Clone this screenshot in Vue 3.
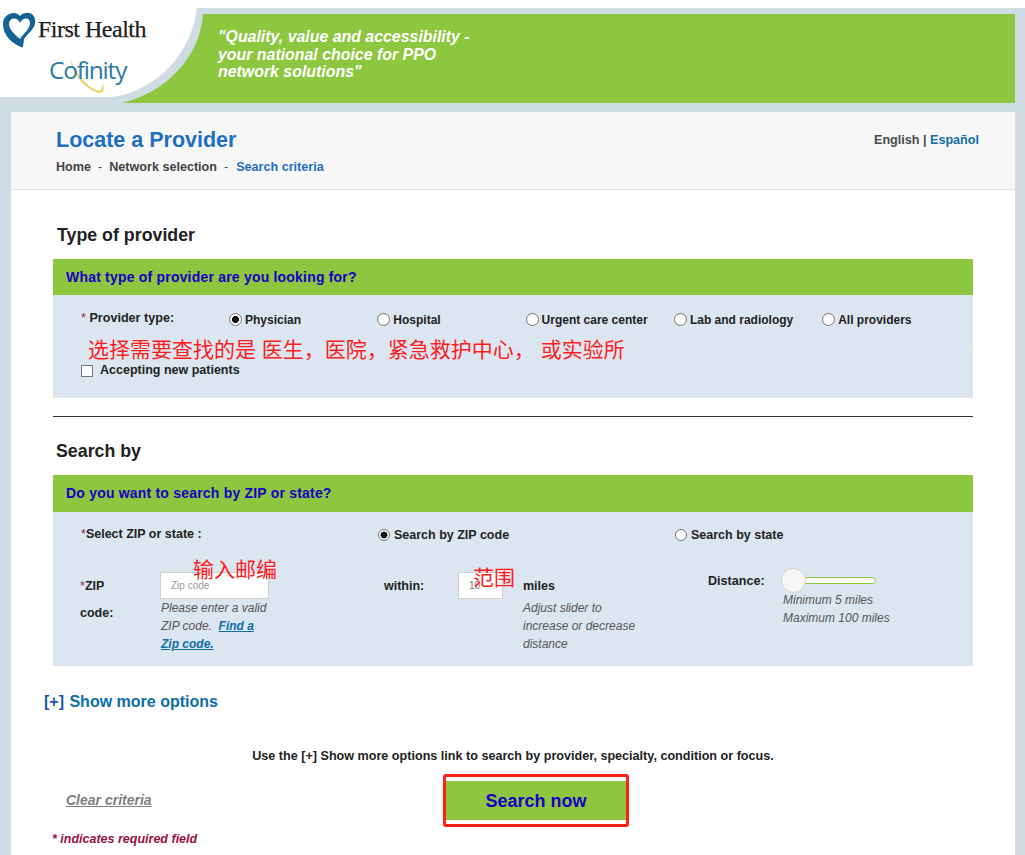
<script setup>
const types = [
  { label: 'Physician', checked: true },
  { label: 'Hospital' },
  { label: 'Urgent care center' },
  { label: 'Lab and radiology' },
  { label: 'All providers' },
]
</script>

<template>
  <div class="page">
    <header class="banner">
      <svg class="banner-art" viewBox="0 0 1025 112" width="1025" height="112" aria-hidden="true">
        <rect x="0" y="0" width="1025" height="112" fill="#d0dce4" />
        <rect x="0" y="0" width="1025" height="8" fill="#ffffff" />
        <path d="M203 14H1015V103H122C165 93 200 58 203 14Z" fill="#8dc63f" />
        <path d="M0 0H197V8C192 50 160 90 112 97H0Z" fill="#ffffff" />
      </svg>
      <div class="logos">
        <div class="fh">
          <svg class="heart" viewBox="0 0 33 37" width="33" height="37" aria-hidden="true">
            <path d="M23 1C29 0 33 5 32 11C31 18 24 22 21 27L20 35L19 35.500C10 32 0 24 0 12C0 5 5 1 11 1C13 1 15 2 17 4C18.500 2 21 1 23 1Z" fill="#136494" />
            <path d="M11 6.500C8 6.500 6 9 6 12C6 17 12 23 17 27C20 22 27 17 27 11C27 8 25 6.500 23 6.500C20.500 6.500 18 8.500 17 11C16 8.500 14 6.500 11 6.500Z" fill="#ffffff" />
          </svg>
          <span class="fh-name">First Health</span>
        </div>
        <div class="cof">
          <svg class="swoosh" viewBox="0 0 56 40" width="56" height="40" aria-hidden="true">
            <path d="M2 1C4 18 20 34 31 36C36 36 37 31 34 26C35 31 33 34 30 33.500C20 31 7 16 2 1Z" fill="#e9d66f" />
          </svg>
          <span class="cof-name">Cofinity</span>
        </div>
      </div>
      <p class="slogan">"Quality, value and accessibility -<br />your national choice for PPO<br />network solutions"</p>
    </header>

    <main class="panel">
      <section class="head">
        <div>
          <h1>Locate a Provider</h1>
          <nav class="crumbs">
            <span>Home</span><i>-</i><span>Network selection</span><i>-</i><a>Search criteria</a>
          </nav>
        </div>
        <div class="lang"><span>English</span> | <a>Español</a></div>
      </section>

      <section class="body">
        <h2 class="first">Type of provider</h2>
        <div class="bar">What type of provider are you looking for?</div>
        <div class="box">
          <div class="type-row">
            <div class="type-label"><b class="req">* </b>Provider type:</div>
            <label v-for="t in types" :key="t.label" class="type-opt">
              <input type="radio" name="ptype" class="radio" :checked="t.checked" />{{ t.label }}
            </label>
          </div>
          <div class="accept-row">
            <label class="accept"><input type="checkbox" class="check" />Accepting new patients</label>
          </div>
        </div>

        <hr class="rule" />

        <h2 class="second">Search by</h2>
        <div class="bar bar2">Do you want to search by ZIP or state?</div>
        <div class="box box2">
          <div class="sel-row">
            <div class="sel-label"><b class="req">*</b>Select ZIP or state :</div>
            <label class="sel-opt sel-zip"><input type="radio" name="by" class="radio" checked />Search by ZIP code</label>
            <label class="sel-opt"><input type="radio" name="by" class="radio" />Search by state</label>
          </div>
          <div class="zip-row">
            <div class="zip-label"><b class="req">*</b>ZIP<br />code:</div>
            <div class="zip-col">
              <input class="field zip-input" placeholder="Zip code" />
              <p class="hint">Please enter a valid<br />ZIP code. &nbsp;<a>Find a</a><br /><a>Zip code.</a></p>
            </div>
            <div class="within">within:</div>
            <div class="miles-col">
              <div class="miles-line"><input class="field miles-input" value="10" /><span>miles</span></div>
              <p class="hint hint-miles">Adjust slider to<br />increase or decrease<br />distance</p>
            </div>
            <div class="distance">Distance:</div>
            <div class="slider-col">
              <div class="slider"><span class="thumb"></span></div>
              <p class="hint">Minimum 5 miles<br />Maximum 100 miles</p>
            </div>
          </div>
        </div>

        <div class="more"><b>[+]</b> Show more options</div>
        <p class="use">Use the [+] Show more options link to search by provider, specialty, condition or focus.</p>

        <div class="actions">
          <a class="clear">Clear criteria</a>
          <div class="red-frame"><button class="go">Search now</button></div>
        </div>
        <p class="note">* indicates required field</p>
      </section>
    </main>

    <span class="anno anno1">选择需要查找的是 医生，医院，紧急救护中心， 或实验所</span>
    <span class="anno anno2">输入邮编</span>
    <span class="anno anno3">范围</span>
  </div>
</template>

<style>
html, body { margin: 0; background: #fff; overflow: hidden; }
</style>

<style scoped>
.page {
  position: relative;
  width: 1025px;
  height: 855px;
  overflow: hidden;
  background: #d0dce4;
  font-family: "Liberation Sans", Arial, sans-serif;
  color: #222;
}
.banner { position: relative; height: 112px; display: flex; }
.banner-art { position: absolute; inset: 0; display: block; }
.logos { position: relative; width: 218px; flex: none; }
.fh { display: flex; align-items: flex-start; padding: 12px 0 0 3px; height: 37px; }
.heart { flex: none; }
.fh-name {
  font-family: "Liberation Serif", serif;
  font-size: 24px;
  letter-spacing: -0.5px;
  -webkit-text-stroke: 0.25px #1d1d1d;
  color: #1d1d1d;
  margin: 4px 0 0 2px;
  line-height: 26px;
  white-space: nowrap;
}
.cof { position: relative; margin: 4px 0 0 49px; height: 40px; }
.cof-name {
  position: relative;
  font-family: "Open Sans", sans-serif;
  font-size: 24.5px;
  font-weight: 400;
  letter-spacing: -1.2px;
  color: #2c7aa3;
  line-height: 34px;
}
.swoosh { position: absolute; left: 19px; top: 4px; }
.slogan {
  position: relative;
  margin: 28px 0 0;
  color: #fff;
  font-size: 15.9px;
  font-weight: bold;
  font-style: italic;
  line-height: 17.5px;
}
.panel { margin: 0 10px 0 11px; background: #fff; height: 743px; }
.head {
  height: 77px;
  background: #f7f7f7;
  border-bottom: 1px solid #e3e3e3;
  display: flex;
  justify-content: space-between;
  padding: 0 36px 0 45px;
}
h1 { margin: 15px 0 0; color: #1f6fc0; font-size: 21.5px; line-height: 26px; font-weight: bold; }
.crumbs { margin-top: 7px; font-size: 12.6px; line-height: 15px; font-weight: bold; color: #444; }
.crumbs i { font-style: normal; font-weight: normal; margin: 0 7px; }
.crumbs a { color: #1f6fc0; margin-left: 1px; }
.lang { margin-top: 21px; font-size: 12.6px; line-height: 15px; font-weight: bold; color: #4a4a4a; }
.lang a { color: #0d6ea8; }
.body { padding: 0 42px; }
h2 { margin: 0; font-size: 17.8px; line-height: 22px; font-weight: bold; color: #222; }
.first { padding: 34px 0 0 4px; }
.second { padding: 23px 0 0 3px; }
.bar {
  margin-top: 13px;
  height: 36px;
  background: #8dc63f;
  color: #1800c4;
  font-size: 14px;
  letter-spacing: 0.2px;
  font-weight: bold;
  line-height: 37px;
  padding-left: 13px;
}
.bar2 { height: 37px; line-height: 37px; }
.box { background: #dce6f1; height: 103px; }
.box2 { height: 154px; }
.req { color: #9a1b58; font-weight: normal; }
.type-row { display: flex; height: 51px; border-bottom: 1px solid #e2eaf4; padding-left: 28px; font-size: 12px; font-weight: bold; }
.type-label { width: 148px; margin-top: 16px; line-height: 15px; font-size: 12.6px; }
.type-opt { width: 148.3px; margin-top: 18px; line-height: 15px; display: flex; align-items: flex-start; white-space: nowrap; }
.radio {
  appearance: none;
  flex: none;
  width: 13px;
  height: 13px;
  margin: 0 3px 0 0;
  border: 1px solid #767676;
  border-radius: 50%;
  background: #fff;
}
.radio:checked { background: radial-gradient(circle, #111 0 3.2px, #fff 3.8px); }
.accept-row { padding: 16px 0 0 28px; font-size: 12.5px; font-weight: bold; }
.accept { display: flex; align-items: center; line-height: 15px; }
.check {
  appearance: none;
  width: 12px;
  height: 12px;
  margin: 0 7px 0 0;
  border: 1px solid #767676;
  background: #fff;
}
.rule { margin: 18px 0 0; height: 1px; background: #333; border: 0; }
.sel-row { display: flex; padding: 14px 0 0 28px; font-size: 12.5px; font-weight: bold; line-height: 15px; height: 23px; }
.sel-label { width: 297px; margin-top: 1px; }
.sel-opt { display: flex; align-items: flex-start; margin-top: 2px; white-space: nowrap; }
.sel-opt .radio { margin-top: 1px; margin-right: 4px; width: 12px; height: 12px; }
.sel-zip { width: 297px; }
.zip-row { display: flex; padding: 23px 0 0 27px; font-size: 12.5px; font-weight: bold; }
.zip-label { width: 80px; line-height: 27px; flex: none; padding-top: 1px; }
.zip-col { width: 224px; flex: none; }
.field {
  display: block;
  box-sizing: border-box;
  border: 1px solid #d0d0d0;
  background: #fff;
  height: 27px;
  font-family: inherit;
  font-size: 10px;
  outline: none;
  padding: 0 10px;
  color: #777;
}
.field::placeholder { color: #999; }
.zip-input { width: 109px; }
.hint { margin: 0; font-size: 12px; font-weight: normal; font-style: italic; line-height: 18px; color: #555; }
.hint a { color: #0d6ea8; font-weight: bold; text-decoration: underline; }
.zip-col .hint { padding-left: 1px; }
.within { width: 74px; flex: none; line-height: 27px; padding-top: 1px; }
.miles-col { width: 250px; flex: none; }
.miles-line { display: flex; align-items: flex-start; gap: 20px; height: 27px; }
.miles-line span { line-height: 25px; margin-top: 2px; }
.miles-input { width: 45px; padding: 0 10px; }
.hint-miles { padding-left: 65px; }
.distance { width: 75px; flex: none; line-height: 16px; font-size: 12.6px; padding-top: 1px; }
.slider {
  position: relative;
  box-sizing: border-box;
  width: 95px;
  height: 7px;
  margin: 5px 0 7px -2px;
  border: 1px solid #8dc63f;
  border-radius: 4px;
  background: #fff;
}
.thumb {
  position: absolute;
  left: -1px;
  top: -10px;
  box-sizing: border-box;
  width: 25px;
  height: 25px;
  border: 1px solid #d3d3d3;
  border-radius: 50%;
  background: #f6f6f6;
}
.more { margin: 27px 0 0 -9px; font-size: 16px; line-height: 18px; font-weight: bold; color: #0d6ea8; }
.more b { color: #1a5aa5; margin-right: 1px; }
.use { margin: 38px 0 0; text-align: center; font-size: 12.6px; line-height: 15px; font-weight: bold; }
.actions { display: flex; align-items: flex-start; margin-top: 10px; padding-left: 13px; }
.clear {
  width: 377px;
  margin-top: 18px;
  font-size: 14px;
  font-weight: bold;
  font-style: italic;
  color: #808080;
  text-decoration: underline;
  line-height: 16px;
}
.red-frame {
  box-sizing: border-box;
  width: 186px;
  height: 53px;
  border: 3px solid #ff1f14;
  border-radius: 3px;
  background: #fff;
  padding: 4px 0 0;
}
.go {
  display: block;
  width: 100%;
  height: 39px;
  border: 0;
  padding: 2px 0 0;
  background: #8dc63f;
  color: #1800c4;
  font-family: inherit;
  font-size: 18px;
  font-weight: bold;
}
.note { margin: 4px 0 0 -1px; font-size: 12.5px; line-height: 16px; font-weight: bold; font-style: italic; color: #9a1040; }
.anno {
  position: absolute;
  font-family: "Liberation Sans", "Noto Sans CJK SC", sans-serif;
  font-size: 21px;
  line-height: 26px;
  color: #ff1c1c;
  white-space: nowrap;
}
.anno1 { left: 88px; top: 337px; }
.anno2 { left: 193px; top: 557px; }
.anno3 { left: 473px; top: 565px; }
</style>
